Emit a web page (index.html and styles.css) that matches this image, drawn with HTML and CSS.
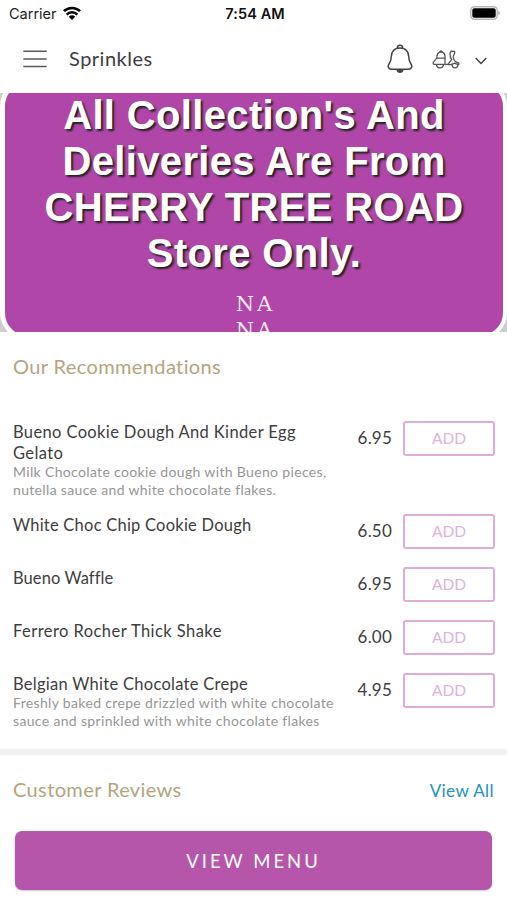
FILE: index.html
```html
<!DOCTYPE html>
<html lang="en">
<head>
<meta charset="utf-8">
<title>Sprinkles</title>
<link rel="stylesheet" href="styles.css">
</head>
<body>
<div class="status">
  <div class="carrier"><span class="carrier-name">Carrier</span>
    <svg width="18" height="14" viewBox="0 0 18 14" fill="none" stroke="#050505" stroke-width="2.5"><path d="M.9 5.1a11.8 11.8 0 0 1 16.2 0M3.6 8.600a7.600 7.600 0 0 1 10.8 0"/><path d="M5.800 10.700a4.500 4.500 0 0 1 6.400 0L9 14z" fill="#050505" stroke="none"/></svg>
  </div>
  <span class="clock">7:54 AM</span>
  <svg class="battery" width="31" height="14" viewBox="0 0 31 14"><rect x=".8" y=".8" width="26.4" height="12.4" rx="3.6" fill="#fff" stroke="#b5b5b5" stroke-width="1.4"/><rect x="2.3" y="2.3" width="23.4" height="9.4" rx="2" fill="#000"/><path d="M28.3 4.7v4.6q1.7-.7 1.7-2.3t-1.7-2.3" fill="#aaa"/></svg>
</div>
<header class="bar">
  <svg class="menu" width="24" height="18" viewBox="0 0 24 18" stroke="#5a5a5a" stroke-width="1.5"><path d="M.3 1.2h23.4M.3 8.9h23.4M.3 16.6h23.4"/></svg>
  <span class="title">Sprinkles</span>
  <svg class="bell" width="26" height="30" viewBox="0 0 26 30" fill="none" stroke="#444" stroke-width="1.5"><path d="M10.2 4.500C10.2.2 15.8.2 15.8 4.500M13 4C7.200 4 4.300 8 4.300 12.600c0 4.400-.9 5.300-2.300 7.400-2 3 .1 5.300 3 5.300h16c2.900 0 5-2.300 3-5.300-1.400-2.100-2.300-3-2.300-7.400C21.700 8 18.800 4 13 4z"/><path d="M9.500 26h7c0 4-7 4-7 0z" fill="#444" stroke="none"/></svg>
  <svg class="scooter" width="28" height="20" viewBox="0 0 28 20" fill="none" stroke="#555" stroke-width="1.300" stroke-linejoin="round"><path d="M4.800 8.200C4.800 3.500 6.200 2 9 2s4.200 1.600 4.200 6.200zM7.500 2l1.500-1.200L10.500 2M4.800 8.200l-3 3.500c-1 1.200-.8 2.700.2 2.700h11V8.200M4.500 14.400c.2 4.700 6.600 4.700 7 0M13 11.500v2.900h3l3.700-5C17.500 7 17.500 1.200 19.500 1.200l3 .3c1.200 2-1.500 3.300-1.300 5.500.2 2.400 1.300 4.700 4.300 5.500 2 .5 1.700 2 .7 2.200l-3.700-1.500-3.500 1.500H16M20 14c0 5.200 6.300 5 6 .5"/></svg>
  <svg class="chevron" width="12" height="8" viewBox="0 0 12 8" fill="none" stroke="#444" stroke-width="1.500"><path d="M.7 1l5.300 5.500L11.300 1"/></svg>
</header>
<section class="banner">
  <div class="notice">
    <h1>All Collection's And<br>Deliveries Are From<br>CHERRY TREE ROAD<br>Store Only.</h1>
    <p>NA<br>NA</p>
  </div>
</section>
<main>
  <h2 class="heading rec-heading">Our Recommendations</h2>
  <ul class="items">
    <li class="item tall"><div class="info"><h3>Bueno Cookie Dough And Kinder Egg<br>Gelato</h3><p>Milk Chocolate cookie dough with Bueno pieces,<br>nutella sauce and white chocolate flakes.</p></div><span class="price">6.95</span><button>ADD</button></li>
    <li class="item"><div class="info"><h3 class="choc-chip">White Choc Chip Cookie Dough</h3></div><span class="price">6.50</span><button>ADD</button></li>
    <li class="item"><div class="info"><h3 class="waffle">Bueno Waffle</h3></div><span class="price">6.95</span><button>ADD</button></li>
    <li class="item"><div class="info"><h3 class="shake">Ferrero Rocher Thick Shake</h3></div><span class="price">6.00</span><button>ADD</button></li>
    <li class="item last"><div class="info"><h3 class="crepe">Belgian White Chocolate Crepe</h3><p>Freshly baked crepe drizzled with white chocolate<br>sauce and sprinkled with white chocolate flakes</p></div><span class="price">4.95</span><button>ADD</button></li>
  </ul>
  <section class="reviews"><h2 class="heading">Customer Reviews</h2><a class="all">View All</a></section>
</main>
<footer><button class="view-menu">VIEW MENU</button></footer>
</body>
</html>
```
FILE: styles.css
```css
* { box-sizing: border-box; }
body { margin: 0; width: 507px; height: 900px; overflow: hidden; background: #fff; color: #3d3d3d; font-family: Lato, "Liberation Sans", sans-serif; }
h1, h2, h3, p, ul { margin: 0; padding: 0; font-weight: 400; }
svg { display: block; flex: none; }
.status { height: 26px; display: grid; grid-template-columns: 1fr auto 1fr; align-items: center; padding: 0 6px 0 9px; font-family: Inter, sans-serif; font-size: 14.5px; color: #222; }
.carrier { display: flex; align-items: center; gap: 6px; }
.clock { font-weight: 600; letter-spacing: .1px; color: #111; }
.battery { justify-self: end; }
.bar { height: 67px; display: flex; align-items: center; padding: 0 20px 3px 23px; }
.title { margin-left: 22px; font-size: 20px; letter-spacing: .5px; flex: 1; line-height: 24px; }
.menu { margin-top: 2px; }
.bell { margin: 2px 19px 0 0; }
.scooter { margin: 3px 15px 0 -1px; }
.chevron { margin-top: 6px; }
.bell { margin-right: 20px; }
.banner { height: 239px; overflow: hidden; background: #ceccce; }
.notice { height: 259px; margin: -13px 0; padding-top: 8px; border: 4px solid #fff; border-left-width: 5px; border-radius: 26px; background: #b047a8; color: #fff; text-align: center; }
.notice h1 { font: 700 40px/46px "Liberation Sans", sans-serif; letter-spacing: .35px; text-shadow: 2px 2px 2px #222; }
.notice p { margin-top: 15px; padding-left: 3px; font: 21px/26px "DejaVu Serif", serif; letter-spacing: 3px; color: #f8e9f7; }
.heading { font-size: 20px; line-height: 24px; color: #b5a47f; letter-spacing: .38px; }
.rec-heading { padding: 22px 13px 0; }
.items { list-style: none; padding: 43px 12px 0 13px; }
.item { height: 53px; display: flex; align-items: flex-start; }
.tall { height: 93px; }
.last { height: 77px; }
.info { flex: 1; white-space: nowrap; margin-top: 1px; }
.info h3 { font-size: 16.5px; line-height: 21px; letter-spacing: .37px; }
.info .choc-chip { letter-spacing: .23px; }
.info .waffle { letter-spacing: .08px; }
.info .shake { letter-spacing: .44px; }
.info .crepe { letter-spacing: .28px; }
.info p { margin-top: -1px; font-size: 14px; line-height: 17.5px; color: #969696; letter-spacing: .34px; }
.price { margin: 5px 11px 0 0; font-size: 17px; line-height: 24px; letter-spacing: .2px; }
.item button { width: 92px; height: 35px; padding: 0 0 2px; background: #fff; border: 2px solid #dfabd9; border-radius: 3px; color: #deb2da; font: 15.5px Lato, sans-serif; }
.reviews { height: 75px; margin-top: -1px; border-top: 6px solid #f0f0f0; display: flex; justify-content: space-between; align-items: center; padding: 0 13px; }
.reviews .heading { margin-bottom: 2px; }
.all { margin-top: 1px; font-size: 17px; color: #2292bf; letter-spacing: .45px; }
footer { padding: 7px 15px; }
.view-menu { display: block; width: 477px; height: 59px; border: 0; border-radius: 7px; background: #b556aa; color: #fff; font: 18.5px Lato, sans-serif; letter-spacing: 3px; box-shadow: 0 1px 2px #ccc; }
```
